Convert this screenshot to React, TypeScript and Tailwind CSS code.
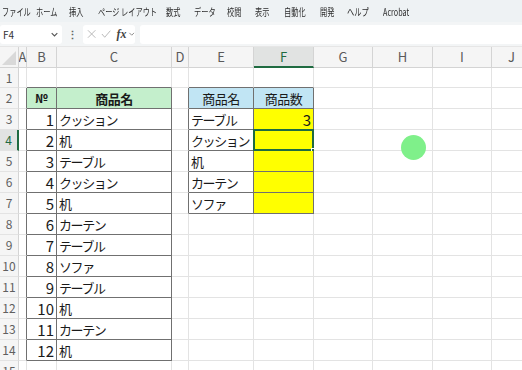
import React from "react";

const menus = [
  { t: "ファイル", w: "w-[34px]" },
  { t: "ホーム", w: "w-[33px]" },
  { t: "挿入", w: "w-[29px]" },
  { t: "ページ レイアウト", w: "w-[68px]" },
  { t: "数式", w: "w-[28px]" },
  { t: "データ", w: "w-[33px]" },
  { t: "校閲", w: "w-[28px]" },
  { t: "表示", w: "w-[29px]" },
  { t: "自動化", w: "w-[36px]" },
  { t: "開発", w: "w-[27px]" },
  { t: "ヘルプ", w: "w-[36px]" },
  { t: "Acrobat", w: "w-[40px]" },
];

const cols = [
  { k: "A", w: "w-[8px]" },
  { k: "B", w: "w-[30px]" },
  { k: "C", w: "w-[115px]" },
  { k: "D", w: "w-[17px]" },
  { k: "E", w: "w-[65px]" },
  { k: "F", w: "w-[60px]" },
  { k: "G", w: "w-[59px]" },
  { k: "H", w: "w-[60px]" },
  { k: "I", w: "w-[59px]" },
  { k: "J", w: "w-[40px]" },
];

const names = ["クッション", "机", "テーブル", "クッション", "机", "カーテン", "テーブル", "ソファ", "テーブル", "机", "カーテン", "机"];
const lookup = ["テーブル", "クッション", "机", "カーテン", "ソファ"];

type Cell = { text?: string; align?: string; bg?: string; bold?: boolean };

const inT1 = (r: number, c: number) => r >= 2 && r <= 14 && (c === 1 || c === 2);
const inT2 = (r: number, c: number) => r >= 2 && r <= 7 && (c === 4 || c === 5);
const inTable = (r: number, c: number) => inT1(r, c) || inT2(r, c);

function cellAt(r: number, c: number): Cell {
  if (r === 2 && c === 1) return { text: "№", align: "justify-center", bg: "bg-[#c4efcc]", bold: true };
  if (r === 2 && c === 2) return { text: "商品名", align: "justify-center", bg: "bg-[#c4efcc]", bold: true };
  if (r === 2 && c === 4) return { text: "商品名", align: "justify-center", bg: "bg-[#c1e5f4]" };
  if (r === 2 && c === 5) return { text: "商品数", align: "justify-center", bg: "bg-[#c1e5f4]" };
  if (r >= 3 && r <= 14 && c === 1) return { text: String(r - 2), align: "justify-end" };
  if (r >= 3 && r <= 14 && c === 2) return { text: names[r - 3], align: "justify-start" };
  if (r >= 3 && r <= 7 && c === 4) return { text: lookup[r - 3], align: "justify-start" };
  if (r >= 3 && r <= 7 && c === 5) return { text: r === 3 ? "3" : "", align: "justify-end", bg: "bg-[#ffff00]" };
  return {};
}

function GridCell({ r, c }: { r: number; c: number }) {
  const cell = cellAt(r, c);
  const darkR = inTable(r, c) || inTable(r, c + 1);
  const darkB = inTable(r, c) || inTable(r + 1, c);
  const selected = r === 4 && c === 5;
  const isNum = (c === 1 && r > 2) || (c === 5 && r === 3);
  let size = "text-[13px] tracking-[-1.4px]";
  if (isNum) size = "text-[15px]";
  if (r === 2) size = c === 1 ? "text-[12px]" : "text-[13px] tracking-[-0.5px]";
  return (
    <div
      className={`relative flex h-full shrink-0 items-center border-r border-b px-[2px] ${cols[c].w} ${cell.align ?? ""} ${cell.bg ?? "bg-white"} ${darkR ? "border-r-[#707070]" : "border-r-[#e3e3e3]"} ${darkB ? "border-b-[#707070]" : "border-b-[#e3e3e3]"}`}
    >
      {cell.text && (
        <span className={`whitespace-nowrap leading-none text-[#1a1a1a] ${size} ${cell.bold ? "font-bold" : ""}`}>
          {cell.text}
        </span>
      )}
      {selected && (
        <div className="absolute -top-[1px] -left-[1px] -right-[1px] -bottom-[1px] border-2 border-[#1f6b41]">
          <div className="absolute -right-[4px] -bottom-[4px] h-[5px] w-[5px] border border-white bg-[#1f6b41]" />
        </div>
      )}
    </div>
  );
}

function Row({ r }: { r: number }) {
  const active = r === 4;
  return (
    <div className={`flex ${r === 1 ? "h-[20px]" : "h-[21px]"}`}>
      <div
        className={`flex h-full w-[19px] shrink-0 items-center justify-center border-b border-b-[#e3e3e3] text-[12px] ${active ? "border-r-2 border-r-[#1f6b41] bg-[#e1e3e2] text-[#1f6b41]" : "border-r border-r-[#d4d4d4] bg-[#f5f5f5] text-[#5f5f5f]"}`}
      >
        {r}
      </div>
      {cols.map((_, c) => (
        <GridCell key={c} r={r} c={c} />
      ))}
    </div>
  );
}

export default function App() {
  const rows = Array.from({ length: 15 }, (_, i) => i + 1);
  return (
    <div className="relative h-[370px] w-[522px] overflow-hidden bg-white font-['Noto_Sans_CJK_JP','Noto_Sans',sans-serif]">
      <div className="flex h-[22px] items-center bg-[#eef2f4] pl-[2px] text-[10px] text-[#2b2b2b]">
        {menus.map((m) => (
          <div key={m.t} className={`shrink-0 ${m.w}`}>
            <span className="inline-block origin-left scale-x-[0.72] whitespace-nowrap">{m.t}</span>
          </div>
        ))}
      </div>
      <div className="flex h-[25px] items-center gap-[4px] border-b border-b-[#e6e6e6] bg-[#f3f5f6] py-[2px]">
        <div className="flex h-[19px] w-[62px] items-center justify-between rounded-[3px] bg-white pl-[3px] pr-[3px] text-[10px] text-[#333]">
          <span>F4</span>
          <svg width="9" height="9" viewBox="0 0 8 8" fill="none" stroke="#555" strokeWidth="1">
            <path d="M1.5 2.8 L4 5.3 L6.5 2.8" />
          </svg>
        </div>
        <span className="mx-[1px] text-[11px] font-bold leading-none text-[#666]">⋮</span>
        <div className="flex h-[19px] w-[52px] items-center gap-[5px] rounded-[3px] bg-white pl-[4px]">
          <svg width="10" height="10" viewBox="0 0 10 10" stroke="#b5b5b5" strokeWidth="1">
            <path d="M1 1 L9 9 M9 1 L1 9" />
          </svg>
          <svg width="11" height="10" viewBox="0 0 11 10" fill="none" stroke="#b5b5b5" strokeWidth="1">
            <path d="M1 5 L4 8.5 L10 1.5" />
          </svg>
          <span className="font-['Liberation_Serif',serif] text-[12px] font-semibold italic leading-none text-[#444]">fx</span>
          <svg width="8" height="8" viewBox="0 0 8 8" fill="none" stroke="#888" strokeWidth="1" className="-ml-[4px]">
            <path d="M1.5 2.8 L4 5.3 L6.5 2.8" />
          </svg>
        </div>
        <div className="ml-[1px] h-[19px] flex-1 rounded-l-[3px] bg-white" />
      </div>
      <div className="flex h-[21px] bg-[#f5f5f5]">
        <div className="relative h-full w-[19px] shrink-0 border-r border-b border-r-[#d4d4d4] border-b-[#d4d4d4]">
          <svg width="14" height="14" viewBox="0 0 14 14" className="absolute right-[2px] bottom-[2px]">
            <path d="M14 0 L14 14 L0 14 Z" fill="#d9d9d9" />
          </svg>
        </div>
        {cols.map((col, c) => (
          <div
            key={col.k}
            className={`flex h-full shrink-0 items-center justify-center text-[13px] ${col.w} ${c === 5 ? "border-r border-r-[#d4d4d4] border-b-2 border-b-[#1f6b41] bg-[#e1e3e2] text-[#1f6b41]" : "border-r border-b border-r-[#d4d4d4] border-b-[#d4d4d4] text-[#5a5a5a]"}`}
          >
            <span className="whitespace-nowrap">{col.k}</span>
          </div>
        ))}
      </div>
      {rows.map((r) => (
        <Row key={r} r={r} />
      ))}
      <div className="absolute left-[401px] top-[135px] h-[25px] w-[25px] rounded-full bg-[#7ff08a] blur-[0.5px]" />
    </div>
  );
}
